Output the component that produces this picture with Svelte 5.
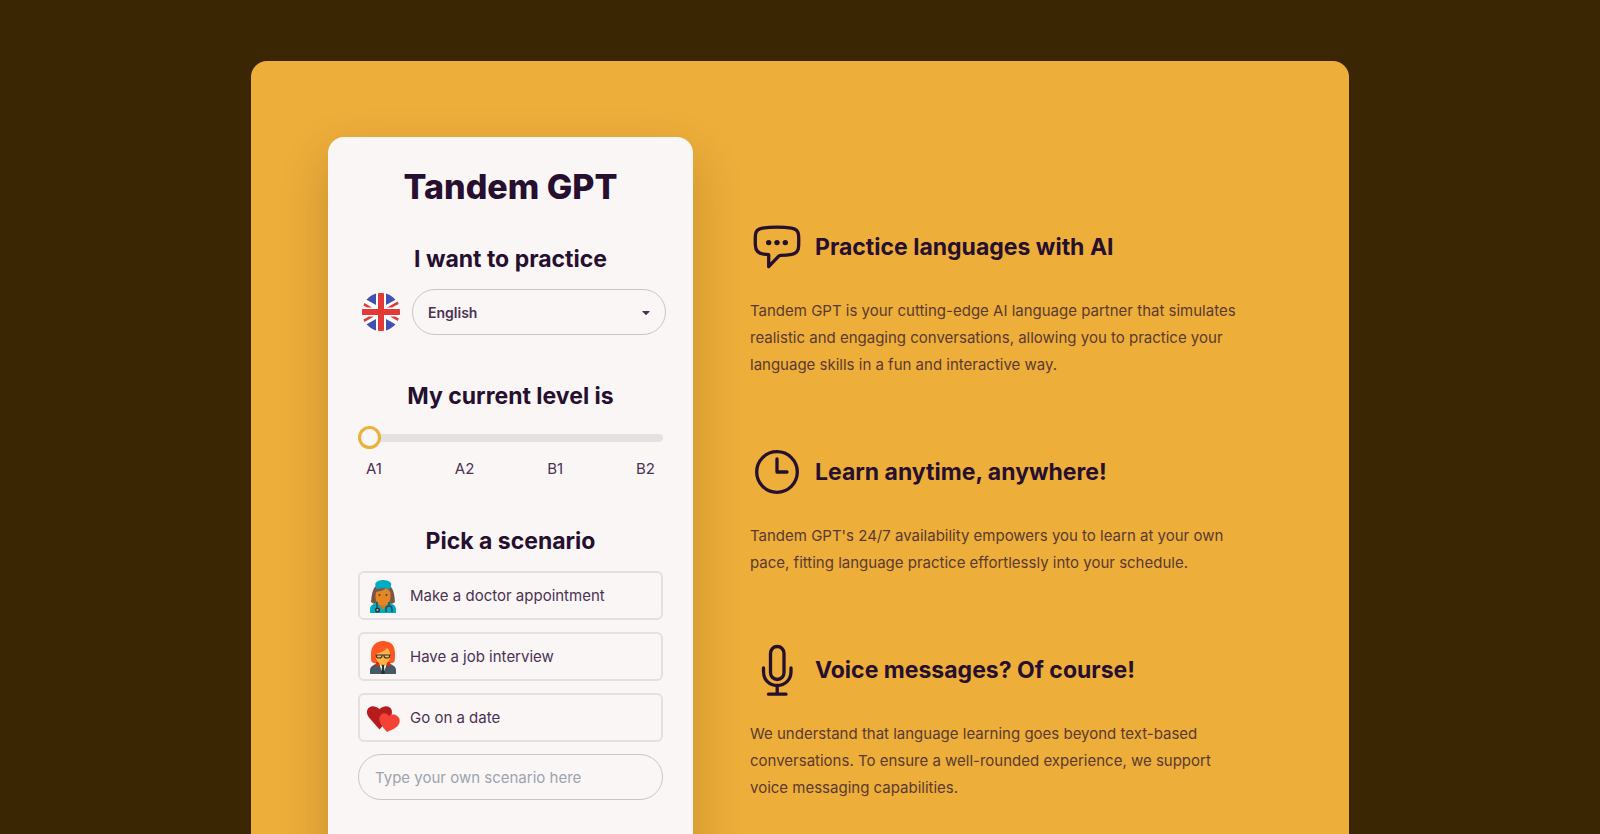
<script>
  let language = $state('English');
  let level = $state(0);
  let custom = $state('');
  const languages = ['English', 'Spanish', 'French', 'German', 'Italian'];
  const levels = ['A1', 'A2', 'B1', 'B2'];
  const scenarios = [
    { icon: 'doctor', label: 'Make a doctor appointment' },
    { icon: 'interview', label: 'Have a job interview' },
    { icon: 'date', label: 'Go on a date' }
  ];
  const features = [
    {
      icon: 'chat',
      title: 'Practice languages with AI',
      text: 'Tandem GPT is your cutting-edge AI language partner that simulates realistic and engaging conversations, allowing you to practice your language skills in a fun and interactive way.'
    },
    {
      icon: 'clock',
      title: 'Learn anytime, anywhere!',
      text: "Tandem GPT's 24/7 availability empowers you to learn at your own pace, fitting language practice effortlessly into your schedule."
    },
    {
      icon: 'mic',
      title: 'Voice messages? Of course!',
      text: 'We understand that language learning goes beyond text-based conversations. To ensure a well-rounded experience, we support voice messaging capabilities.'
    }
  ];
</script>

<div class="page">
  <main class="panel">
    <form class="card">
      <h1>Tandem GPT</h1>

      <h2><label for="language">I want to practice</label></h2>
      <div class="language">
        <svg class="flag" viewBox="0 0 38 38" aria-hidden="true">
          <circle cx="19" cy="19" r="19" fill="#fff" />
          <path d="M14 .6v11.400L4.500 6.800C7.500 3.500 10.500 1.500 14 .6zM24 .6v11.400l9.500-5.200C30.500 3.500 27.500 1.500 24 .6zM14 37.400V26l-9.500 5.200c2.500 2.700 6 5.300 9.500 6.200zM24 37.400V26l9.500 5.200c-2.500 2.700-6 5.300-9.500 6.200z" fill="#3f51b5" />
          <path d="m2.500 10 7.500 4.500H5L1.300 12.500zM35.500 8.500l1.200 2.500-6.700 3.500h-5zM2.500 29 1.300 26.500 7 23.500h5zM35.800 28l1.100-2.500-3.900-2h-5z" fill="#e53935" />
          <path d="M16 .2a19 19 0 0 1 6 0V16h15.800a19 19 0 0 1 0 6H22v15.800a19 19 0 0 1-6 0V22H.2a19 19 0 0 1 0-6H16z" fill="#e53935" />
        </svg>
        <div class="select">
          <select id="language" bind:value={language}>
            {#each languages as item}<option>{item}</option>{/each}
          </select>
          <svg class="caret" viewBox="0 0 8 8" aria-hidden="true"><path d="M.8 3h6.400q.8 0 .3.700L4.500 6.800q-.5.500-1 0L.5 3.700Q0 3 .8 3z" fill="#4a3252" /></svg>
        </div>
      </div>

      <h2><label for="level">My current level is</label></h2>
      <input id="level" class="slider" type="range" min="0" max="3" bind:value={level} />
      <div class="levels">
        {#each levels as item}<span>{item}</span>{/each}
      </div>

      <h2><label for="custom">Pick a scenario</label></h2>
      <div class="scenarios">
        {#each scenarios as item}
          <button type="button" class="scenario" onclick={() => (custom = item.label)}>
            <svg viewBox="0 0 40 40" aria-hidden="true">
              {#if item.icon === 'doctor'}
                <path d="M20 8c-8 0-11 4-12 18 1 1 3 2 6 2h12c3 0 5-1 6-2C31 12 28 8 20 8z" fill="#795548" />
                <path d="M7 37v-4c0-4 5-6 9-7l4-2 4 2c4 1 9 3 9 7v4z" fill="#00acc1" />
                <path d="M15.500 25h9v3L20 34l-4.500-6z" fill="#d87414" />
                <path d="M13 16c5-1 8-2 10.500-4 1.500 2 4 3 4 5v4c0 5-3.500 8.500-7.500 8.500S12.500 26 12.500 21z" fill="#e58625" />
                <path d="M13.500 13c-1-3-1.500-5-1-6 3-4 12.500-4 15.500 0 .5 1 0 3-1 6-4-1-9.500-1-13.500 0z" fill="#00acc1" />
                <circle cx="16.500" cy="19" r="1" fill="#5d4037" /><circle cx="23.500" cy="19" r="1" fill="#5d4037" />
                <path d="M14 26v7M26 26v4M23 36v-3c0-4 6-4 6 0v3" fill="none" stroke="#37474f" stroke-width="1.500" />
                <circle cx="14.500" cy="34" r="1.800" fill="#b0bec5" stroke="#263238" stroke-width="1.500" />
              {:else if item.icon === 'interview'}
                <path d="M20 4c1 0 2 0 3 .5C30 5 32 11 32 17c0 5 0 7-1 8-3 3-19 3-22 0-1-1-1-3-1-8C8 9 13 4 20 4z" fill="#ff5722" />
                <path d="M7 37v-4c0-4 5-6 9-7h8c4 1 9 3 9 7v4z" fill="#455a64" />
                <path d="M13 25h3v4l-1 1-2-1zM24 25h3v4l-2 1-1-1z" fill="#dd2c00" />
                <path d="m16.500 27 2 7h3l2-7z" fill="#fff" />
                <path d="M16 23h8v4l-4 2-4-2z" fill="#ff9800" />
                <path d="M18.500 28h3l-.5 2 1 7h-4l1-7z" fill="#263238" />
                <path d="M13 17c5-2 9-3 11-6 2 2 3 3 3 6v3c0 4-3 7-7 7s-7-3-7-7z" fill="#ffb74d" />
                <path d="M12.500 18h15M13.500 18.500v1c0 1 1 1.500 2.500 1.500s3-.5 3-2v-1h2v1c0 1.500 1.500 2 3 2s2.500-.5 2.500-1.500v-1" fill="none" stroke="#37312d" stroke-width="1.100" />
              {:else}
                <path d="M16.500 31.500 6 19.500C0 11 8.500 4 16.500 11c8-7 16.500 0 10.500 8.500z" fill="#b71c1c" />
                <path d="M24 34c-4-4.500-8.500-9.500-7.500-14.500 1-4.500 6.500-6 9.500-1.500 4-3 9-1 10.500 3C38 28 31 31 24 34z" fill="#f44336" />
              {/if}
            </svg>
            {item.label}
          </button>
        {/each}
        <input id="custom" class="custom" type="text" placeholder="Type your own scenario here" bind:value={custom} />
      </div>
    </form>

    <div class="features">
      {#each features as item}
        <section>
          <h2>
            <svg viewBox="0 0 54 54" aria-hidden="true" fill="none" stroke="#260f2f" stroke-width="3.300" stroke-linecap="round" stroke-linejoin="round">
              {#if item.icon === 'chat'}
                <path d="M27 7.200c-6 0-10.500.3-14.500.9C8 8.700 5.500 11.500 5.400 15.500c-.2 4-.2 7 0 10 .2 5.500 3.500 8 8.100 8.600l5.200.6v12l10-10.500c.6-.6 1.200-.8 2-.9 4-.1 7.500-.4 11-1 4.500-.8 6.800-3.600 6.900-7.800.2-4 .2-8 0-11-.2-4.500-3-6.800-7.100-7.400-4-.6-8.500-.9-14.500-.9z" />
                <g fill="#260f2f" stroke="none"><circle cx="18.700" cy="22.600" r="2.700" /><circle cx="27" cy="22.600" r="2.700" /><circle cx="35.300" cy="22.600" r="2.700" /></g>
              {:else if item.icon === 'clock'}
                <circle cx="27" cy="27" r="20.300" /><path d="M27 14v13h10" />
              {:else}
                <rect x="20.500" y="3.500" width="13.500" height="33" rx="6.750" />
                <path d="M13.500 25v3.500c0 8.500 6 14 13.700 14S41 37 41 28.500V25M27.200 43v8M18.500 51.200h17.500" />
              {/if}
            </svg>
            {item.title}
          </h2>
          <p>{item.text}</p>
        </section>
      {/each}
    </div>
  </main>
</div>

<style>
  :global(body) { margin: 0; background: #3b2603; }
  * { box-sizing: border-box; }
  .page {
    height: 100vh;
    overflow: hidden;
    padding: 61px 24px 0;
    font-family: Inter, 'Liberation Sans', sans-serif;
    font-size: 15px;
    color: #260f2f;
  }
  .panel {
    max-width: 1098px;
    margin: 0 auto;
    padding: 76px 77px;
    border-radius: 16px;
    background: #edae3a;
    display: grid;
    grid-template-columns: minmax(0, 365px) minmax(0, 1fr);
    gap: 57px;
  }
  .card {
    padding: 30px 30px 84px;
    border-radius: 16px;
    background: #faf6f5;
    box-shadow: 0 20px 48px rgba(58, 37, 3, 0.22);
  }
  h1, h2, p { margin: 0; }
  h1 { font-size: 34px; line-height: 40px; font-weight: 800; text-align: center; }
  h2 { font-size: 23px; line-height: 32px; font-weight: 700; }
  .card h2 { margin: 45px 0 14px; text-align: center; }
  .card h1 + h2 { margin-top: 36px; }
  .language { display: flex; align-items: center; gap: 12px; margin-right: -3px; padding-left: 4px; }
  .flag { width: 38px; height: 38px; flex: none; }
  .select { flex: 1; display: grid; align-items: center; }
  .select > * { grid-area: 1 / 1; }
  select {
    appearance: none;
    width: 100%;
    height: 46px;
    padding: 0 15px;
    border: 1px solid #c9c4c6;
    border-radius: 23px;
    background: transparent;
    color: #4a3252;
    font: 600 14px Inter, sans-serif;
  }
  .caret { width: 8px; height: 8px; justify-self: end; margin-right: 16px; pointer-events: none; }
  .slider { appearance: none; display: block; width: 100%; height: 23px; margin: 0; background: transparent; }
  .slider::-webkit-slider-runnable-track { height: 8px; border-radius: 4px; background: #e5e0e1; }
  .slider::-webkit-slider-thumb {
    appearance: none;
    width: 23px;
    height: 23px;
    margin-top: -8px;
    border: 3px solid #edae3a;
    border-radius: 50%;
    background: #faf6f5;
  }
  .levels { display: flex; justify-content: space-between; padding: 8px 8px 0; line-height: 23px; color: #4a3252; }
  .scenarios { display: grid; gap: 12px; }
  .scenario {
    display: flex;
    align-items: center;
    gap: 7px;
    height: 49px;
    padding: 0 3px;
    border: 2px solid #e5e0e0;
    border-radius: 6px;
    background: transparent;
    color: #4a3252;
    font: 400 15px Inter, sans-serif;
    text-align: left;
  }
  .scenario svg { width: 40px; height: 40px; flex: none; }
  .custom {
    width: 100%;
    height: 46px;
    padding: 0 16px;
    border: 1px solid #c9c4c6;
    border-radius: 23px;
    background: transparent;
    color: #4a3252;
    font: 400 15px Inter, sans-serif;
  }
  .custom::placeholder { color: #9ca3af; }
  .features { display: grid; align-content: start; gap: 67px; padding: 83px 30px 0 0; }
  .features h2 { display: flex; align-items: center; gap: 11px; }
  .features svg { width: 54px; height: 54px; flex: none; }
  .features p { margin-top: 23px; line-height: 27px; color: #5a3a30; }
</style>
